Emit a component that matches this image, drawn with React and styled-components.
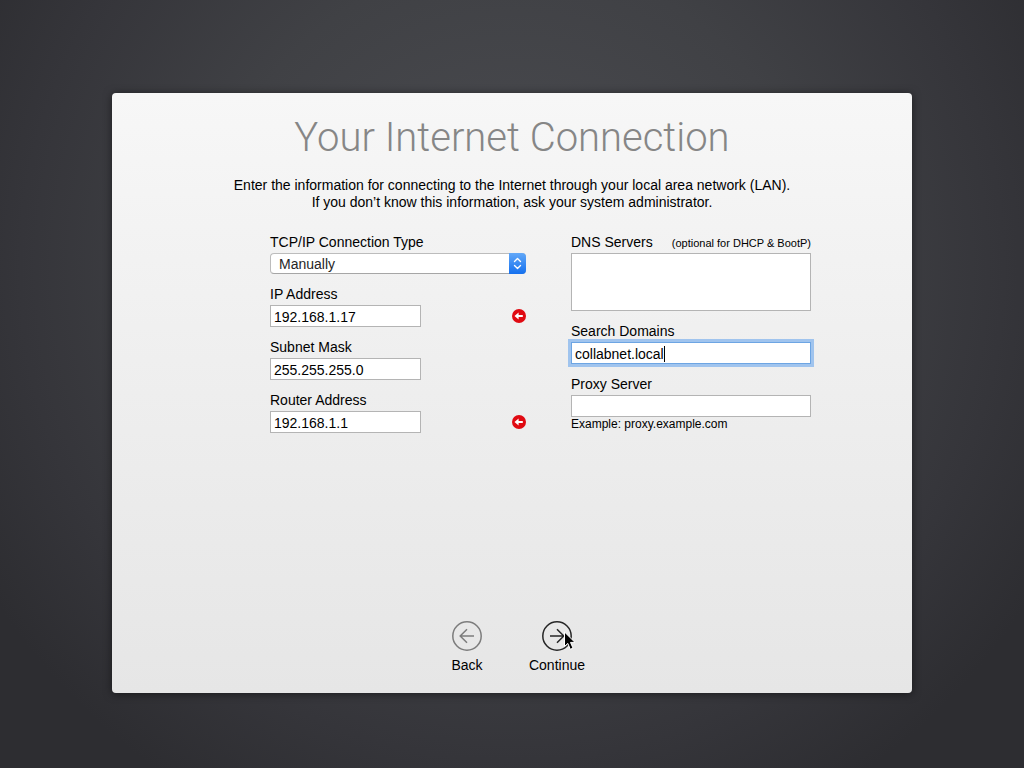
import React from "react";
import styled, { createGlobalStyle, css } from "styled-components";

const GlobalStyle = createGlobalStyle`
  *, *::before, *::after { box-sizing: border-box; }
  body {
    margin: 0;
    font-family: "Liberation Sans", Arial, sans-serif;
    font-size: 14px;
    line-height: 16px;
    color: #000;
  }
  button, input, textarea, select { font: inherit; color: inherit; }
`;

const Desktop = styled.main`
  display: flex;
  align-items: center;
  justify-content: center;
  min-height: 100vh;
  padding: 34px 16px 16px;
  background: radial-gradient(ellipse 60% 80% at 50% 35%, #4c4d52 0%, #404145 50%, #35353a 80%, #2d2d31 100%);
`;

const Panel = styled.section`
  display: flex;
  flex-direction: column;
  width: 100%;
  max-width: 800px;
  min-height: 600px;
  padding: 20px 0;
  border-radius: 4px;
  background: linear-gradient(#f7f7f7, #eeeeee 50%, #e6e6e6);
  box-shadow: 0 1px 8px rgba(0, 0, 0, 0.5);
`;

const Title = styled.h1`
  margin: 0;
  font-family: Roboto, "Liberation Sans", sans-serif;
  font-size: 40px;
  font-weight: 300;
  line-height: 50px;
  text-align: center;
  color: #868686;
`;

const Intro = styled.p`
  margin: 14px 0 23px;
  line-height: 17px;
  text-align: center;
`;

const Form = styled.form`
  display: grid;
  grid-template-columns: 256px 240px;
  column-gap: 45px;
  justify-content: center;
  padding-left: 57px;
`;

const Column = styled.div`
  display: flex;
  flex-direction: column;
  gap: 12px;
`;

const Field = styled.div`
  display: flex;
  flex-direction: column;
`;

const LabelRow = styled.div`
  display: flex;
  align-items: baseline;
  justify-content: space-between;
`;

const Label = styled.label`
  height: 16px;
  margin-bottom: 3px;
`;

const Note = styled.span`
  font-size: 11px;
  line-height: 14px;
`;

const Hint = styled.span`
  font-size: 12px;
  line-height: 14px;
`;

const ControlRow = styled.div`
  position: relative;
  display: flex;
  align-items: center;
  justify-content: space-between;
`;

const boxStyle = css`
  border: 1px solid #b4b4b4;
  border-radius: 0;
  background: #fff;
  outline: none;
`;

const TextInput = styled.input`
  ${boxStyle}
  width: ${(p) => (p.$wide ? "100%" : "151px")};
  height: 22px;
  padding: 2px 3px 0;
  ${(p) =>
    p.$active &&
    css`
      border-color: #6da5e3;
      box-shadow: 0 0 0 3px #a0c4ee;
      caret-color: transparent;
    `}
`;

const Caret = styled.span`
  position: absolute;
  top: 4px;
  left: 93px;
  width: 1px;
  height: 16px;
  background: #000;
`;

const TextArea = styled.textarea`
  ${boxStyle}
  display: block;
  width: 100%;
  height: 58px;
  padding: 3px;
  resize: none;
`;

const SelectWrap = styled.div`
  position: relative;
  display: flex;
`;

const Select = styled.select`
  appearance: none;
  width: 100%;
  height: 21px;
  padding: 0 24px 0 8px;
  border: 1px solid #bcbcbc;
  border-bottom-color: #a6a6a6;
  border-radius: 4px;
  background: #fff;
  color: #262626;
  outline: none;
`;

const Stepper = styled.span`
  position: absolute;
  top: 0;
  right: 0;
  display: flex;
  width: 17px;
  height: 21px;
  border-radius: 0 4px 4px 0;
  background: linear-gradient(#62a8f8, #1470ef);
  pointer-events: none;
`;

const Footer = styled.nav`
  display: flex;
  justify-content: center;
  margin-top: auto;
`;

const NavButton = styled.button`
  position: relative;
  display: flex;
  flex-direction: column;
  align-items: center;
  gap: 6px;
  width: 90px;
  padding: 0;
  border: 0;
  background: none;

  > svg:first-child {
    color: ${(p) => (p.$muted ? "#7c7c7c" : "#262626")};
  }
`;

const Pointer = styled.svg`
  position: absolute;
  top: 10px;
  left: 51px;
`;

function ArrowCircle({ back }) {
  return (
    <svg width="30" height="30" viewBox="0 0 30 30" fill="none" stroke="currentColor" strokeWidth="1.5" aria-hidden="true">
      <circle cx="15" cy="15" r="14.2" />
      {back ? <path d="M22 15H8.3M15 8.2L8.2 15L15 21.8" /> : <path d="M8 15H21.7M15 8.2L21.8 15L15 21.8" />}
    </svg>
  );
}

function Flag() {
  return (
    <svg width="14" height="14" viewBox="0 0 14 14" role="img" aria-label="Required">
      <circle cx="7" cy="7" r="7" fill="#e00a12" />
      <path d="M2.5 7L6.6 3.6V6H10.8V8H6.6V10.4Z" fill="#fff" />
    </svg>
  );
}

function AddressField({ id, label, value, flagged }) {
  return (
    <Field>
      <Label htmlFor={id}>{label}</Label>
      <ControlRow>
        <TextInput id={id} defaultValue={value} />
        {flagged && <Flag />}
      </ControlRow>
    </Field>
  );
}

export default function App() {
  return (
    <>
      <GlobalStyle />
      <Desktop>
        <Panel>
          <Title>Your Internet Connection</Title>
          <Intro>
            Enter the information for connecting to the Internet through your local area network (LAN).
            <br />
            If you don’t know this information, ask your system administrator.
          </Intro>
          <Form id="network" onSubmit={(e) => e.preventDefault()}>
            <Column>
              <Field>
                <Label htmlFor="type">TCP/IP Connection Type</Label>
                <SelectWrap>
                  <Select id="type" defaultValue="Manually">
                    <option>Manually</option>
                  </Select>
                  <Stepper>
                    <svg width="17" height="21" viewBox="0 0 17 21" fill="none" stroke="#fff" strokeWidth="1.4" strokeLinecap="round" strokeLinejoin="round" aria-hidden="true">
                      <path d="M5.5 8.5L8.5 5.5L11.5 8.5M5.5 12.5L8.5 15.5L11.5 12.5" />
                    </svg>
                  </Stepper>
                </SelectWrap>
              </Field>
              <AddressField id="ip" label="IP Address" value="192.168.1.17" flagged />
              <AddressField id="mask" label="Subnet Mask" value="255.255.255.0" />
              <AddressField id="router" label="Router Address" value="192.168.1.1" flagged />
            </Column>
            <Column>
              <Field>
                <LabelRow>
                  <Label htmlFor="dns">DNS Servers</Label>
                  <Note>(optional for DHCP &amp; BootP)</Note>
                </LabelRow>
                <TextArea id="dns" />
              </Field>
              <Field>
                <Label htmlFor="domains">Search Domains</Label>
                <ControlRow>
                  <TextInput id="domains" defaultValue="collabnet.local" $wide $active />
                  <Caret />
                </ControlRow>
              </Field>
              <Field>
                <Label htmlFor="proxy">Proxy Server</Label>
                <TextInput id="proxy" $wide />
                <Hint>Example: proxy.example.com</Hint>
              </Field>
            </Column>
          </Form>
          <Footer>
            <NavButton type="button" $muted>
              <ArrowCircle back />
              Back
            </NavButton>
            <NavButton type="submit" form="network">
              <ArrowCircle />
              Continue
              <Pointer width="14" height="20" viewBox="0 0 14 20" aria-hidden="true">
                <path d="M1.5 1V15.5L4.8 12.4L7.3 18.3L10 17.1L7.5 11.4H12Z" fill="#000" stroke="#fff" strokeWidth="1" />
              </Pointer>
            </NavButton>
          </Footer>
        </Panel>
      </Desktop>
    </>
  );
}
